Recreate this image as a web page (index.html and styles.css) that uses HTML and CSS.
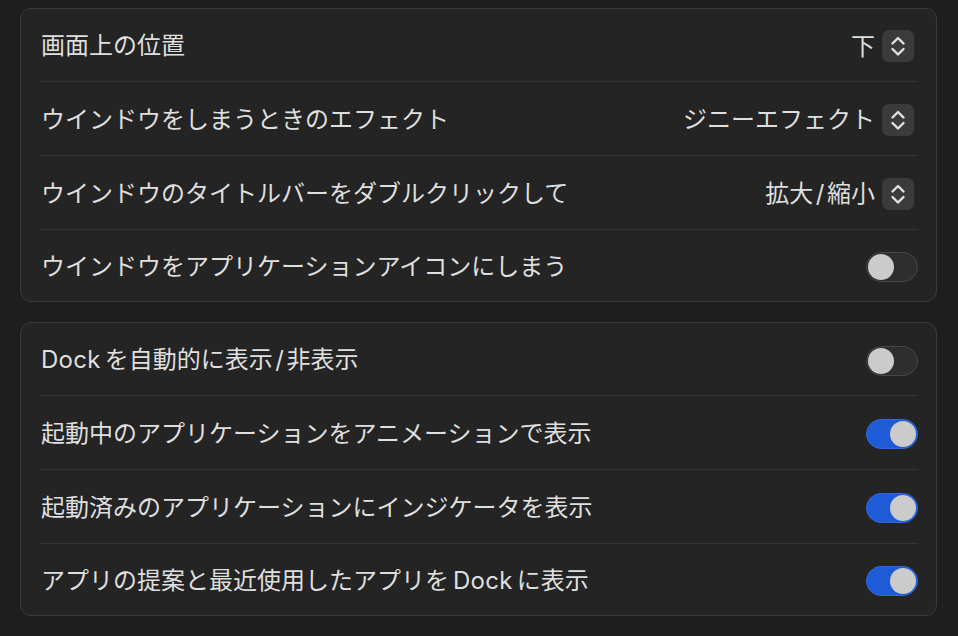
FILE: index.html
```html
<!DOCTYPE html>
<html lang="ja">
<head>
<meta charset="utf-8">
<title>Dock</title>
<link rel="stylesheet" href="styles.css">
</head>
<body>
<div class="page">
  <section class="panel panel-top">
    <div class="row">
      <span class="label">画面上の位置</span>
      <div class="popup"><span class="value">下</span><span class="stepper"><svg viewBox="0 0 32 32" width="32" height="32"><path d="M10.5 13.5 16 8l5.5 5.5M10.5 19 16 24.5l5.5-5.5" fill="none" stroke="#e2e2e2" stroke-width="2.4" stroke-linecap="round" stroke-linejoin="round"/></svg></span></div>
    </div>
    <div class="row">
      <span class="label">ウインドウをしまうときのエフェクト</span>
      <div class="popup"><span class="value">ジニーエフェクト</span><span class="stepper"><svg viewBox="0 0 32 32" width="32" height="32"><path d="M10.5 13.5 16 8l5.5 5.5M10.5 19 16 24.5l5.5-5.5" fill="none" stroke="#e2e2e2" stroke-width="2.4" stroke-linecap="round" stroke-linejoin="round"/></svg></span></div>
    </div>
    <div class="row">
      <span class="label">ウインドウのタイトルバーをダブルクリックして</span>
      <div class="popup"><span class="value">拡大<span class="sl">/</span>縮小</span><span class="stepper"><svg viewBox="0 0 32 32" width="32" height="32"><path d="M10.5 13.5 16 8l5.5 5.5M10.5 19 16 24.5l5.5-5.5" fill="none" stroke="#e2e2e2" stroke-width="2.4" stroke-linecap="round" stroke-linejoin="round"/></svg></span></div>
    </div>
    <div class="row">
      <span class="label">ウインドウをアプリケーションアイコンにしまう</span>
      <span class="toggle"><span class="knob"></span></span>
    </div>
  </section>
  <section class="panel panel-bottom">
    <div class="row">
      <span class="label"><span class="latin end">Dock</span>を自動的に表示<span class="sl">/</span>非表示</span>
      <span class="toggle"><span class="knob"></span></span>
    </div>
    <div class="row">
      <span class="label">起動中のアプリケーションをアニメーションで表示</span>
      <span class="toggle on"><span class="knob"></span></span>
    </div>
    <div class="row">
      <span class="label">起動済みのアプリケーションにインジケータを表示</span>
      <span class="toggle on"><span class="knob"></span></span>
    </div>
    <div class="row">
      <span class="label">アプリの提案と最近使用したアプリを<span class="latin mid">Dock</span>に表示</span>
      <span class="toggle on"><span class="knob"></span></span>
    </div>
  </section>
</div>
</body>
</html>
```
FILE: styles.css
```css
* { box-sizing: border-box; }
html, body {
  margin: 0;
  padding: 0;
  background: #1e1e1e;
}
body {
  width: 958px;
  height: 636px;
  overflow: hidden;
  font-family: "Inter", "Noto Sans CJK JP", sans-serif;
  font-size: 24px;
  color: #dfdfdf;
}
.page {
  padding: 8px 21px 0 20px;
  display: flex;
  flex-direction: column;
  gap: 20px;
}
.panel {
  background: #242424;
  border: 1px solid #3a3a3a;
  border-radius: 11px;
  padding: 0 18px 0 19px;
}
.row {
  display: flex;
  align-items: center;
  justify-content: space-between;
  height: 74px;
  border-bottom: 1px solid #343434;
}
.row:first-child { height: 73px; }
.row:last-child { height: 71px; border-bottom: none; }
.label {
  padding-left: 1px;
  margin-top: -3px;
  white-space: nowrap;
}
.latin { letter-spacing: 0.3px; }
.latin.end { margin-right: 4px; }
.latin.mid { margin: 0 4px; }
.sl { margin: 0 2.5px; }
.popup {
  display: flex;
  align-items: center;
  gap: 7px;
  margin-right: 4px;
  margin-top: 2px;
}
.value { margin-top: -4px; }
.stepper {
  width: 32px;
  height: 32px;
  border-radius: 7px;
  background: #3b3b3b;
  display: flex;
}
.stepper svg { display: block; }
.toggle {
  position: relative;
  width: 52px;
  height: 30px;
  border-radius: 15px;
  background: #2e2e2e;
  border: 1px solid #474747;
  flex: none;
  margin-top: 3px;
}
.toggle .knob {
  position: absolute;
  top: 1px;
  left: 1px;
  width: 26px;
  height: 26px;
  border-radius: 50%;
  background: #cbcbcb;
}
.toggle.on {
  background: #1f5bd6;
  border-color: #3069dc;
}
.toggle.on .knob {
  left: 23px;
}
```
